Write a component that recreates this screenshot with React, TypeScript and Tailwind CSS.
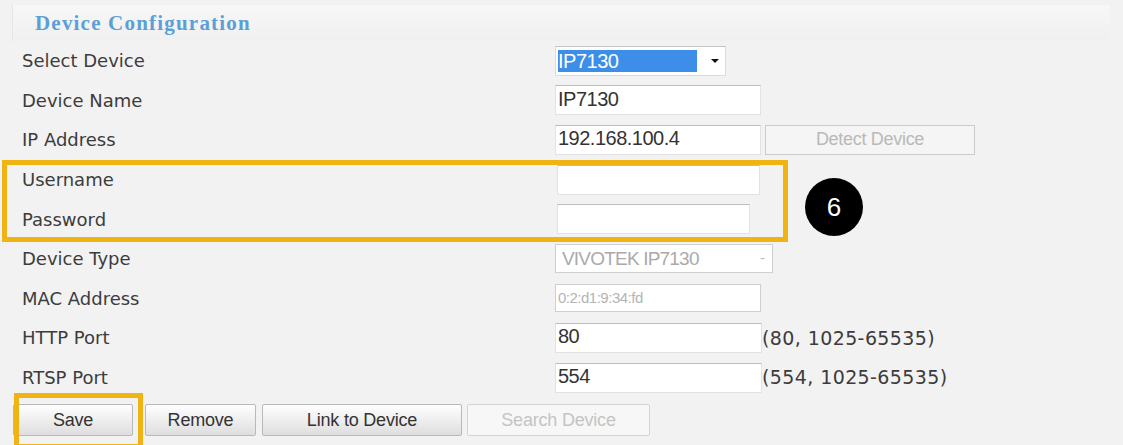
import type { ReactNode } from 'react';

type RowProps = {
  label: string;
  children?: ReactNode;
};

function Row({ label, children }: RowProps) {
  return (
    <div className="flex h-[39.6px] items-center pl-[22px]">
      <div className="w-[533px] shrink-0 font-['DejaVu_Sans',sans-serif] text-[18px] text-[#3c3c3c]">
        {label}
      </div>
      {children}
    </div>
  );
}

function TextBox({ value, width = 206, muted = false }: { value?: string; width?: number; muted?: boolean }) {
  return (
    <div
      className={
        muted
          ? "flex h-[28px] items-center border border-[#cfcfcf] bg-white pl-[2px] font-['Liberation_Sans',sans-serif] text-[15px] tracking-[-0.5px] text-[#b4b4b4]"
          : "flex h-[30px] items-center border border-[#e2e2e2] border-t-[#bdbdbd] bg-white pb-[3px] pl-[2px] font-['Liberation_Sans',sans-serif] text-[20px] leading-none tracking-[-0.5px] text-[#333]"
      }
      style={{ width }}
    >
      {value}
    </div>
  );
}

function Button({ label, width, disabled = false, className = '' }: { label: string; width: number; disabled?: boolean; className?: string }) {
  return (
    <button
      className={
        (disabled
          ? "border-[#d4d4d4] bg-[#f7f7f7] text-[#c4c4c4] "
          : "border-[#b9b9b9] bg-gradient-to-b from-white to-[#dedede] text-[#333] ") +
        "h-[32px] rounded-[2px] border font-['Liberation_Sans',sans-serif] text-[18px] tracking-[-0.2px] " +
        className
      }
      style={{ width }}
    >
      {label}
    </button>
  );
}

export default function App() {
  return (
    <div className="relative h-[445px] w-[1123px] overflow-hidden bg-[#f2f2f2] pt-[5px]">
      <div className="ml-[12px] mr-[13px] h-[36px] border-l border-[#e6e6e6] bg-gradient-to-b from-[#f7f7f7] to-[#f0f0f0] pl-[22px] pt-[8px] font-['Liberation_Serif',serif] text-[21px] font-bold leading-none tracking-[1.2px] text-[#5b9fd6]">
        Device Configuration
      </div>

      <Row label="Select Device">
        <div className="flex h-[30px] w-[171px] items-center border border-[#dcdcdc] border-t-[#c4c4c4] bg-white pl-[2px]">
          <div className="flex h-[22px] w-[139px] items-center bg-[#3d8ee8] font-['Liberation_Sans',sans-serif] text-[20px] tracking-[-0.5px] text-white">
            IP7130
          </div>
          <svg width="10" height="6" viewBox="0 0 10 6" className="ml-[13px]">
            <path d="M1 1 L9 1 L5 5 Z" fill="#111" />
          </svg>
        </div>
      </Row>
      <Row label="Device Name">
        <TextBox value="IP7130" />
      </Row>
      <Row label="IP Address">
        <TextBox value="192.168.100.4" />
        <button className="ml-[4px] h-[30px] w-[210px] border border-[#cbcbcb] bg-[#f5f5f5] font-['Liberation_Sans',sans-serif] text-[18px] tracking-[-0.3px] text-[#b9b9b9]">
          Detect Device
        </button>
      </Row>
      <Row label="Username">
        <div className="ml-[2px]">
          <TextBox width={203} />
        </div>
      </Row>
      <Row label="Password">
        <div className="ml-[2px]">
          <TextBox width={193} />
        </div>
      </Row>
      <Row label="Device Type">
        <div className="flex h-[29px] w-[218px] items-center border border-[#cfcfcf] bg-white pl-[6px] font-['Liberation_Sans',sans-serif] text-[19px] tracking-[-0.8px] text-[#aaaaaa]">
          <span className="flex-1">VIVOTEK IP7130</span>
          <span className="mr-[8px] text-[14px] text-[#bbb]">-</span>
        </div>
      </Row>
      <Row label="MAC Address">
        <TextBox value="0:2:d1:9:34:fd" muted />
      </Row>
      <Row label="HTTP Port">
        <TextBox value="80" width={207} />
        <span className="font-['DejaVu_Sans',sans-serif] text-[19px] tracking-[0.4px] text-[#3c3c3c]">(80, 1025-65535)</span>
      </Row>
      <Row label="RTSP Port">
        <TextBox value="554" width={207} />
        <span className="font-['DejaVu_Sans',sans-serif] text-[19px] tracking-[0.4px] text-[#3c3c3c]">(554, 1025-65535)</span>
      </Row>

      <div className="mt-[7px] flex pl-[13px]">
        <Button label="Save" width={120} />
        <Button label="Remove" width={111} className="ml-[12px]" />
        <Button label="Link to Device" width={200} className="ml-[6px]" />
        <Button label="Search Device" width={183} disabled className="ml-[5px]" />
      </div>

      {/* callout highlights */}
      <div className="pointer-events-none absolute left-[2px] top-[160px] h-[82px] w-[786px] border-[5px] border-[#efb313]" />
      <div className="pointer-events-none absolute left-[14px] top-[393px] h-[56px] w-[129px] border-[5px] border-[#efb313]" />
      <div className="absolute left-[805px] top-[178px] flex h-[58px] w-[58px] items-center justify-center rounded-full bg-black font-['Liberation_Sans',sans-serif] text-[26px] text-white">
        6
      </div>
    </div>
  );
}
